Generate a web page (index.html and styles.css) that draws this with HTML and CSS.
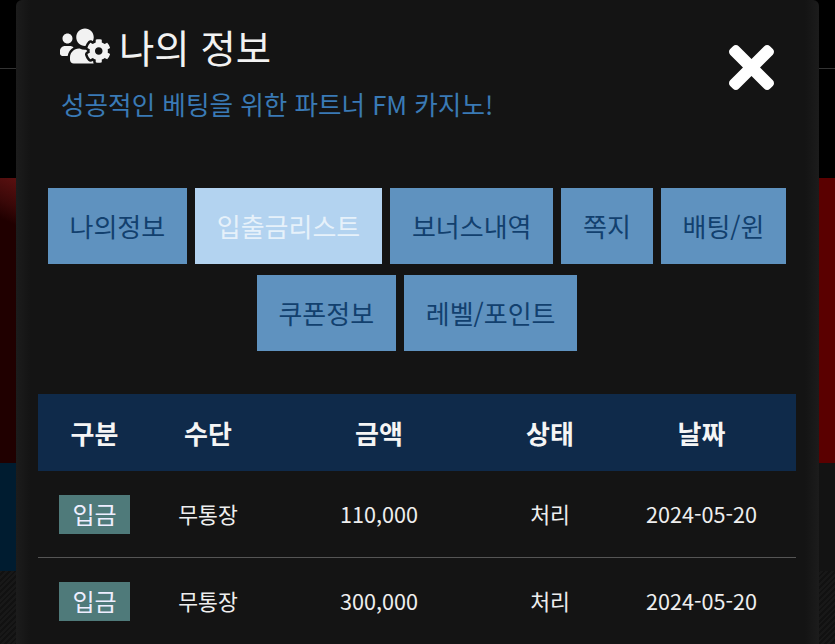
FILE: index.html
```
<!DOCTYPE html>
<html lang="ko">
<head>
<meta charset="utf-8">
<title>나의 정보</title>
<link rel="stylesheet" href="styles.css">
</head>
<body>
<div class="backdrop">
  <div class="band band-top"></div>
  <div class="band band-nav"></div>
  <div class="band band-red"></div>
  <div class="band band-blue"></div>
  <div class="band band-stripes"></div>
</div>
<section class="modal">
  <button class="close" aria-label="닫기">
    <svg class="close-icon" viewBox="0 0 352 352"><path transform="translate(0 -80)" d="M242.72 256l100.07-100.07c12.28-12.28 12.28-32.19 0-44.48l-22.24-22.24c-12.28-12.28-32.19-12.28-44.48 0L176 189.28 75.93 89.21c-12.28-12.28-32.19-12.28-44.48 0L9.21 111.45c-12.28 12.28-12.28 32.19 0 44.48L109.28 256 9.21 356.07c-12.28 12.28-12.28 32.19 0 44.48l22.24 22.24c12.28 12.28 32.2 12.28 44.48 0L176 322.72l100.07 100.07c12.28 12.28 32.2 12.28 44.48 0l22.24-22.24c12.28-12.28 12.28-32.19 0-44.48L242.72 256z"/></svg>
  </button>
  <header class="head">
    <h1 class="title">
      <svg class="title-icon" viewBox="0 0 640 512"><path d="M610.5 341.3c2.6-14.1 2.6-28.5 0-42.6l25.8-14.9c3-1.7 4.3-5.2 3.3-8.5-6.7-21.6-18.2-41.2-33.2-57.4-2.3-2.5-6-3.1-9-1.4l-25.8 14.9c-10.9-9.3-23.4-16.5-36.9-21.3v-29.8c0-3.4-2.4-6.4-5.7-7.1-22.3-5-45-4.8-66.2 0-3.3.7-5.7 3.7-5.7 7.1v29.8c-13.5 4.8-26 12-36.9 21.3l-25.8-14.9c-2.9-1.7-6.7-1.1-9 1.4-15 16.2-26.5 35.8-33.2 57.4-1 3.3.4 6.8 3.3 8.5l25.8 14.9c-2.6 14.1-2.6 28.5 0 42.6l-25.8 14.9c-3 1.7-4.3 5.2-3.3 8.5 6.7 21.6 18.2 41.1 33.2 57.4 2.3 2.5 6 3.1 9 1.4l25.8-14.9c10.9 9.3 23.4 16.5 36.9 21.3v29.8c0 3.4 2.4 6.4 5.7 7.1 22.3 5 45 4.8 66.2 0 3.3-.7 5.7-3.7 5.7-7.1v-29.8c13.5-4.8 26-12 36.9-21.3l25.8 14.9c2.9 1.7 6.7 1.1 9-1.4 15-16.2 26.5-35.8 33.2-57.4 1-3.3-.4-6.8-3.3-8.5l-25.8-14.9zM496 368.5c-26.8 0-48.5-21.8-48.5-48.5s21.8-48.5 48.5-48.5 48.5 21.8 48.5 48.5-21.7 48.5-48.5 48.5zM96 224c35.3 0 64-28.7 64-64s-28.7-64-64-64-64 28.7-64 64 28.7 64 64 64zm224 32c1.9 0 3.7-.5 5.6-.6 8.3-21.7 20.5-42.1 36.3-59.2 7.4-8 17.9-12.6 28.9-12.6 6.9 0 13.7 1.8 19.6 5.3l7.9 4.6c.8-.5 1.6-.9 2.4-1.4 7-14.6 11.2-30.8 11.2-48 0-61.9-50.1-112-112-112S208 82.1 208 144c0 61.9 50.1 112 112 112zm105.2 194.5c-2.3-1.2-4.6-2.6-6.8-3.9-8.2 4.8-15.3 9.8-27.5 9.8-10.9 0-21.4-4.6-28.9-12.6-18.3-19.8-32.3-43.9-40.2-69.6-10.7-34.5 24.9-49.7 25.8-50.3-.1-2.6-.1-5.2 0-7.8l-7.9-4.6c-3.8-2.2-7-5-9.8-8.1-3.3.2-6.5.6-9.8.6-24.6 0-47.6-6-68.5-16h-8.3C179.6 288 128 339.6 128 403.2V432c0 26.5 21.5 48 48 48h255.4c-3.7-6-6.2-12.8-6.2-20.1v-9.4zM173.1 274.6C161.5 263.1 145.6 256 128 256H64c-35.3 0-64 28.7-64 64v32c0 17.7 14.3 32 32 32h65.9c6.3-47.4 34.9-87.3 75.2-109.4z"/></svg>
      <span>나의 정보</span>
    </h1>
    <p class="subtitle">성공적인 베팅을 위한 파트너 FM 카지노!</p>
  </header>
  <nav class="tabs">
    <a class="tab">나의정보</a>
    <a class="tab tab-active">입출금리스트</a>
    <a class="tab">보너스내역</a>
    <a class="tab">쪽지</a>
    <a class="tab">배팅/윈</a>
    <a class="tab">쿠폰정보</a>
    <a class="tab">레벨/포인트</a>
  </nav>
  <table class="list">
    <colgroup>
      <col class="c1"><col class="c2"><col class="c3"><col class="c4"><col class="c5">
    </colgroup>
    <thead>
      <tr><th>구분</th><th>수단</th><th>금액</th><th>상태</th><th>날짜</th></tr>
    </thead>
    <tbody>
      <tr><td><span class="badge">입금</span></td><td>무통장</td><td>110,000</td><td>처리</td><td>2024-05-20</td></tr>
      <tr><td><span class="badge">입금</span></td><td>무통장</td><td>300,000</td><td>처리</td><td>2024-05-20</td></tr>
    </tbody>
  </table>
</section>
</body>
</html>
```
FILE: styles.css
```
html, body {
  margin: 0;
  height: 100%;
}
body {
  position: relative;
  width: 835px;
  height: 644px;
  overflow: hidden;
  background: #000;
  font-family: "Noto Sans CJK KR", "Noto Sans", sans-serif;
}
.backdrop {
  display: flex;
  flex-direction: column;
  height: 644px;
}
.band-top {
  height: 68px;
  background: #000;
  border-bottom: 1px solid #333;
}
.band-nav {
  height: 109px;
  background: #000;
}
.band-red {
  height: 285px;
  background:
    linear-gradient(205deg, #5a1010 0%, #3a0808 45%, #200000 75%) no-repeat 0 0 / 16px 56px,
    linear-gradient(90deg, #200000 0 50%, #5a0000 50%);
}
.band-blue {
  height: 108px;
  background: linear-gradient(90deg, #001c30 0 50%, #131313 50%);
}
.band-stripes {
  flex: 1;
  background: repeating-linear-gradient(135deg, #181818 0 2px, #111 2px 4px);
}
.modal {
  position: absolute;
  left: 16px;
  top: 0;
  width: 803px;
  height: 644px;
  box-sizing: border-box;
  background: linear-gradient(90deg, #1c1c1c 0, #141414 14px, #141414 789px, #1c1c1c 803px);
  border-radius: 6px 6px 0 0;
  padding-top: 20px;
  overflow: hidden;
}
.close {
  position: absolute;
  left: 713px;
  top: 45px;
  width: 45px;
  height: 45px;
  padding: 0;
  border: 0;
  background: none;
}
.close-icon {
  display: block;
  width: 45px;
  height: 45px;
  fill: #fff;
}
.head {
  padding-left: 44px;
}
.title {
  display: flex;
  align-items: center;
  gap: 9px;
  margin: 0;
  height: 52px;
  font-size: 38.4px;
  line-height: 52px;
  font-weight: 400;
  color: #f2f2f2;
}
.title-icon {
  width: 50px;
  height: 40px;
  fill: #f2f2f2;
}
.subtitle {
  margin: 14px 0 0 1px;
  font-size: 25.6px;
  line-height: 36px;
  color: #3a7ab5;
}
.tabs {
  display: flex;
  flex-wrap: wrap;
  justify-content: center;
  gap: 11px 8px;
  margin-top: 66px;
  padding: 0 23px 0 22px;
}
.tab {
  padding: 0 21.8px;
  height: 76px;
  line-height: 76px;
  font-size: 26px;
  color: #12406e;
  background: #5f92bf;
}
.tab-active {
  background: #b3d3f0;
  color: #e6f1fa;
}
.list {
  width: 758px;
  margin: 43px 0 0 22px;
  border-collapse: collapse;
  table-layout: fixed;
  color: #eee;
}
.c1 { width: 113px; }
.c2 { width: 114px; }
.c3 { width: 228px; }
.c4 { width: 114px; }
.c5 { width: 189px; }
.list th {
  height: 77px;
  padding: 0;
  background: #0f2a4a;
  color: #f5f5f5;
  font-size: 26px;
  font-weight: 700;
}
.list td {
  height: 84px;
  padding: 0 0 2px;
  text-align: center;
  font-size: 21.6px;
  border-bottom: 1px solid #555;
}
.list tbody tr:last-child td {
  border-bottom: 0;
}
.badge {
  display: inline-block;
  width: 71px;
  height: 39px;
  margin-top: 2px;
  line-height: 37px;
  font-size: 24px;
  color: #eef;
  background: #4f7a7a;
}
```
